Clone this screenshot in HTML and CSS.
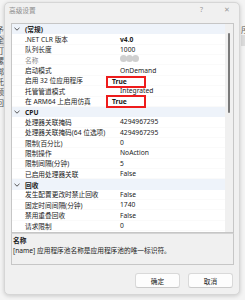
FILE: index.html
```html
<!DOCTYPE html>
<html lang="zh-CN">
<head>
	<meta charset="UTF-8" />
	<meta name="viewport" content="width=device-width, initial-scale=1.0" />
	<title>高级设置</title>
	<link rel="stylesheet" href="styles.css">
</head>
<body>
	<!-- 背后的窗口 -->
	<div class="backdrop">
		<div class="back-left">
			<span>予</span><span class="back-line">全</span><span>打</span><span>螺</span><span>绑</span><span>托</span><span>频</span><span>回</span>
		</div>
		<div class="back-right">
			<span>序</span><span class="back-line">&nbsp;</span>
		</div>
	</div>

	<div class="dialog">
		<div class="titlebar">
			<span class="title">高级设置</span>
			<span class="tb-btn help">?</span>
			<span class="tb-btn close">✕</span>
		</div>

		<div class="grid">
			<div class="rows">
				<div class="cat"><svg class="chev" viewBox="0 0 6 4" width="6" height="4"><path d="M0.5 0.8 L3 3.2 L5.5 0.8" fill="none" stroke="#444" stroke-width="0.9"/></svg>(常规)</div>
				<div class="row"><span class="name">.NET CLR 版本</span><span class="val b">v4.0</span></div>
				<div class="row"><span class="name">队列长度</span><span class="val">1000</span></div>
				<div class="row"><span class="name dim">名称</span><span class="val"><span class="redact"><i></i><i></i><i></i></span></span></div>
				<div class="row"><span class="name">启动模式</span><span class="val">OnDemand</span></div>
				<!-- 红框标注 -->
				<div class="row"><span class="name">启用 32 位应用程序</span><span class="val b mark mark-1">True</span></div>
				<div class="row"><span class="name">托管管道模式</span><span class="val">Integrated</span></div>
				<div class="row"><span class="name">在 ARM64 上启用仿真</span><span class="val b mark mark-2">True</span></div>
				<div class="cat"><svg class="chev" viewBox="0 0 6 4" width="6" height="4"><path d="M0.5 0.8 L3 3.2 L5.5 0.8" fill="none" stroke="#444" stroke-width="0.9"/></svg>CPU</div>
				<div class="row"><span class="name">处理器关联掩码</span><span class="val">4294967295</span></div>
				<div class="row"><span class="name">处理器关联掩码(64 位选项)</span><span class="val">4294967295</span></div>
				<div class="row"><span class="name">限制(百分比)</span><span class="val">0</span></div>
				<div class="row"><span class="name">限制操作</span><span class="val">NoAction</span></div>
				<div class="row"><span class="name">限制间隔(分钟)</span><span class="val">5</span></div>
				<div class="row"><span class="name">已启用处理器关联</span><span class="val">False</span></div>
				<div class="cat"><svg class="chev" viewBox="0 0 6 4" width="6" height="4"><path d="M0.5 0.8 L3 3.2 L5.5 0.8" fill="none" stroke="#444" stroke-width="0.9"/></svg>回收</div>
				<div class="row"><span class="name">发生配置更改时禁止回收</span><span class="val">False</span></div>
				<div class="row"><span class="name">固定时间间隔(分钟)</span><span class="val">1740</span></div>
				<div class="row"><span class="name">禁用重叠回收</span><span class="val">False</span></div>
				<div class="row"><span class="name">请求限制</span><span class="val">0</span></div>
			</div>
			<div class="scroll"><div class="thumb"></div></div>
		</div>

		<div class="desc">
			<div class="desc-title">名称</div>
			<div class="desc-text">[name] 应用程序池名称是应用程序池的唯一标识符。</div>
		</div>

		<div class="buttons">
			<button class="btn">确定</button>
			<button class="btn">取消</button>
		</div>
	</div>
</body>
</html>
```

FILE: styles.css
```css
html, body{
	margin: 0;
	padding: 0;
}
body{
	width: 245px;
	height: 300px;
	overflow: hidden;
	position: relative;
	background: #f4f4f4;
	font-family: "Noto Sans", "Noto Sans CJK SC", sans-serif;
	font-size: 6.7px;
	color: #1b1b1b;
}

/* 背后窗口 */
.backdrop{
	position: absolute;
	inset: 0;
	color: #555;
	font-size: 8px;
}
.back-left{
	position: absolute;
	left: -4px;
	top: 25px;
	display: flex;
	flex-direction: column;
}
.back-left span{
	height: 10.4px;
	line-height: 10.4px;
}
.back-right{
	position: absolute;
	left: 241px;
	top: 25px;
	display: flex;
	flex-direction: column;
}
.back-right span{
	height: 10.4px;
	line-height: 10.4px;
}
.back-line{
	background: #dcdcdc;
}

/* 对话框 */
.dialog{
	position: absolute;
	left: 4px;
	top: 2px;
	width: 236px;
	height: 293px;
	box-sizing: border-box;
	background: #f0f0f0;
	border: 1px solid #d6d6d6;
	border-radius: 5px;
	box-shadow: 0 1px 4px rgba(0,0,0,.18);
	display: flex;
	flex-direction: column;
}
.titlebar{
	height: 13px;
	display: flex;
	align-items: center;
	padding: 0 0 0 4px;
	margin-bottom: 7px;
	color: #8f8f8f;
}
.title{
	flex: 1;
	font-size: 6.7px;
}
.tb-btn{
	width: 25px;
	text-align: center;
	font-size: 7px;
	color: #9a9a9a;
}

/* 属性表 */
.grid{
	margin: 0 5px 0 6px;
	height: 210px;
	box-sizing: border-box;
	border: 1px solid #c6c6c6;
	display: flex;
}
.rows{
	flex: 1;
	background: #fff;
	display: flex;
	flex-direction: column;
}
.row, .cat{
	height: 10.37px;
	display: flex;
	align-items: center;
	white-space: nowrap;
	flex-shrink: 0;
}
.row{
	border-bottom: 1px solid #fafafa;
	box-sizing: border-box;
}
.cat{
	background: #eef3fa;
	font-weight: bold;
	padding-left: 2px;
}
.chev{
	width: 6px;
	height: 4px;
	margin-right: 5px;
}
.name{
	width: 95px;
	padding-left: 13px;
	flex-shrink: 0;
	overflow: hidden;
}
.dim{
	color: #8a8a8a;
}
.b{
	font-weight: bold;
}
.redact{
	display: inline-flex;
	filter: blur(.6px);
}
.redact i{
	width: 7px;
	height: 7px;
	border-radius: 50%;
	background: #cfcfcf;
	margin-right: -1px;
}
.scroll{
	width: 8px;
	background: #f0f0f0;
	position: relative;
}
.thumb{
	position: absolute;
	left: 3px;
	top: 9px;
	width: 2px;
	height: 80px;
	border-radius: 1px;
	background: #7a7a7a;
}

/* 红框标注 */
.mark{
	margin-left: -14px;
	width: 40px;
	flex-shrink: 0;
	box-sizing: border-box;
	border: 2px solid #ee1c1c;
	background: #fff;
	padding-left: 4px;
	display: flex;
	align-items: center;
	position: relative;
	z-index: 1;
}
.mark-1{
	height: 12px;
	margin-top: 3px;
}
.mark-2{
	height: 13px;
	margin-top: 1px;
}

/* 描述 */
.desc{
	margin: 0 5px 0 6px;
	height: 32px;
	box-sizing: border-box;
	border: 1px solid #c6c6c6;
	border-top-color: #d4d4d4;
	padding: 2px 1px;
}
.desc-title{
	font-weight: bold;
	line-height: 10px;
}
.desc-text{
	line-height: 10px;
}

/* 按钮 */
.buttons{
	display: flex;
	justify-content: flex-end;
	gap: 8px;
	margin: 8px 6px 0 0;
}
.btn{
	width: 45px;
	height: 15px;
	padding: 0;
	font-family: inherit;
	font-size: 6.7px;
	color: #1b1b1b;
	background: #fdfdfd;
	border: 1px solid #d9d9d9;
	border-bottom-color: #cacaca;
	border-radius: 3px;
}
```
